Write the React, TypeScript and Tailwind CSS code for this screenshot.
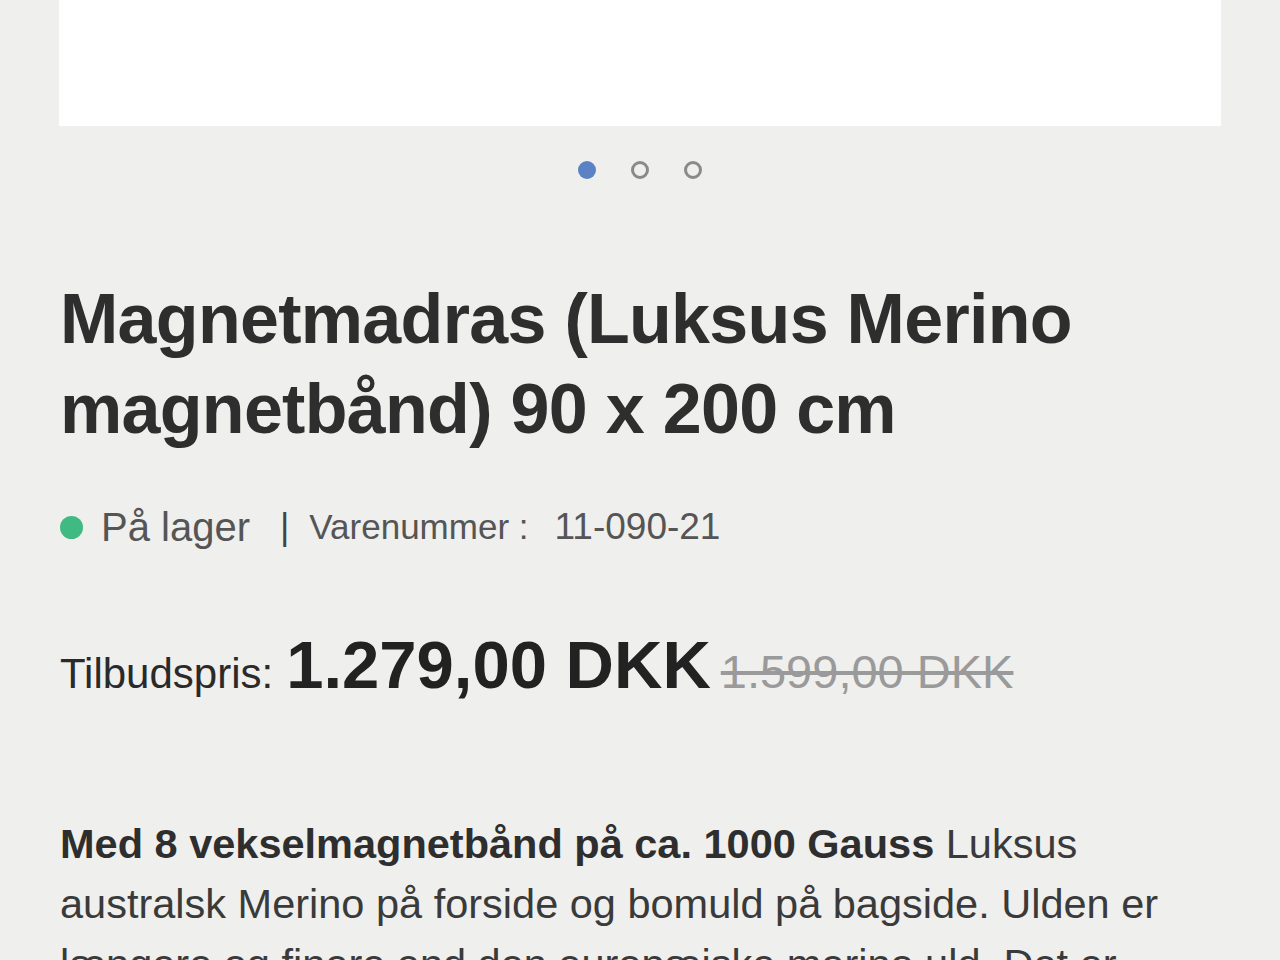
import React from "react";

const font = { fontFamily: '"Liberation Sans", Arial, sans-serif' };

const Dots: React.FC = () => (
  <div className="flex justify-center items-center gap-[35px] h-[88px]">
    <span className="w-[18px] h-[18px] rounded-full bg-[#5b82c4]" />
    <span className="w-[18px] h-[18px] rounded-full border-[3px] border-[#8a8a8a]" />
    <span className="w-[18px] h-[18px] rounded-full border-[3px] border-[#8a8a8a]" />
  </div>
);

export default function App() {
  return (
    <div className="h-[960px] w-[1280px] bg-[#efefed] overflow-hidden" style={font}>
      <div className="px-[59px]">
        <div className="h-[126px] bg-white" />
      </div>
      <Dots />
      <div className="px-[60px]">
        <h1 className="mt-[60px] text-[70px] leading-[90px] font-bold text-[#2e2e2e] tracking-[-0.01em]">
          Magnetmadras (Luksus Merino magnetbånd) 90 x 200 cm
        </h1>
        <div className="mt-[43px] flex items-center text-[#555555]">
          <span className="w-[23px] h-[23px] rounded-full bg-[#3fba82] mr-[18px]" />
          <span className="text-[40px]">På lager</span>
          <span className="ml-[30px] text-[36px] text-[#444]">|</span>
          <span className="ml-[20px] text-[35px]">Varenummer :</span>
          <span className="ml-[26px] text-[37px]">11-090-21</span>
        </div>
        <div className="mt-[68px] flex items-baseline leading-[80px]">
          <span className="text-[42px] text-[#2a2a2a]">Tilbudspris:</span>
          <span className="ml-[13px] text-[67px] font-bold text-[#222]">1.279,00 DKK</span>
          <span className="ml-[10px] text-[47px] text-[#9a9a9a] line-through decoration-[#9a9a9a]">1.599,00 DKK</span>
        </div>
        <p className="mt-[100px] text-[41.5px] leading-[60px] text-[#3a3a3a]">
          <strong className="font-bold text-[#2e2e2e]">Med 8 vekselmagnetbånd på ca. 1000 Gauss</strong> Luksus australsk Merino på forside og bomuld på bagside. Ulden er længere og finere end den europæiske merino uld. Det er
        </p>
      </div>
    </div>
  );
}
